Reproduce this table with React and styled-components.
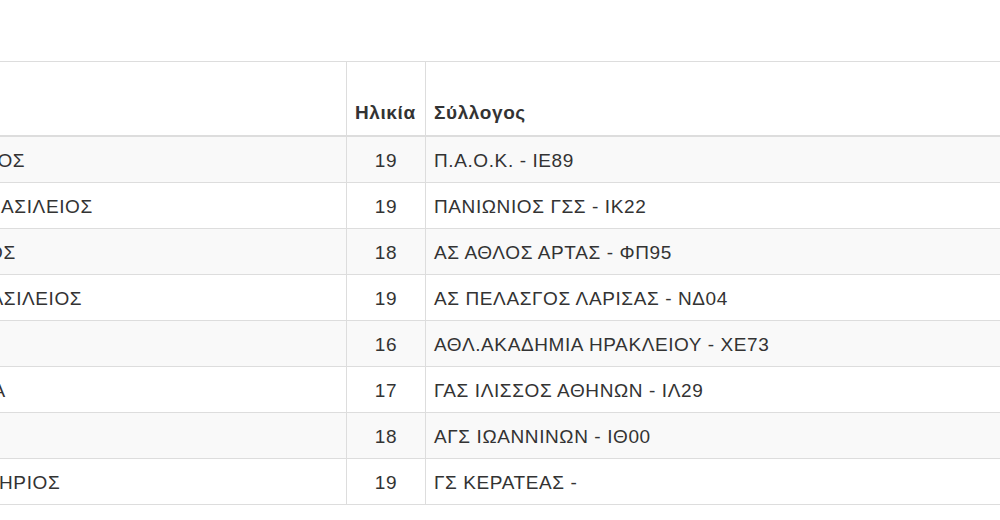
import React from "react";
import styled, { createGlobalStyle } from "styled-components";

const GlobalStyle = createGlobalStyle`
  html, body {
    margin: 0;
    padding: 0;
    background: #fff;
    overflow: hidden;
  }
  body {
    font-family: "Liberation Sans", Arial, sans-serif;
    color: #333;
  }
`;

const Page = styled.div`
  width: 1000px;
  height: 520px;
  overflow: hidden;
  padding-top: 61px;
  box-sizing: border-box;
`;

const Table = styled.table`
  margin-left: -209px;
  width: 1250px;
  border-collapse: collapse;
  border-spacing: 0;
  table-layout: fixed;
  font-size: 19px;
  letter-spacing: 0.6px;
  line-height: 29px;
  border-top: 1px solid #ddd;
  border-bottom: 1px solid #ddd;
`;

const HeadCell = styled.th`
  height: 57px;
  padding: 8px;
  text-align: ${(p) => (p.$center ? "center" : "left")};
  vertical-align: bottom;
  font-weight: bold;
  border-left: 1px solid #ddd;
  border-bottom: 2px solid #ddd;
  white-space: nowrap;
`;

const Row = styled.tr`
  background: ${(p) => (p.$striped ? "#f9f9f9" : "#fff")};
`;

const Cell = styled.td`
  padding: 9px 8px 7px;
  text-align: ${(p) => (p.$center ? "center" : "left")};
  vertical-align: top;
  border-left: 1px solid #ddd;
  border-top: 1px solid #ddd;
  white-space: nowrap;
  overflow: hidden;
`;

const athletes = [
  { name: "ΔΗΜΗΤΡΙΟΥ ΝΙΚΟΛΑΟΣ", age: 19, club: "Π.Α.Ο.Κ. - ΙΕ89" },
  { name: "ΘΕΟΔΩΡΟΠΟΥΛΟΣ ΒΑΣΙΛΕΙΟΣ", age: 19, club: "ΠΑΝΙΩΝΙΟΣ ΓΣΣ - ΙΚ22" },
  { name: "ΠΑΠΑΔΑΚΗΣ ΑΓΓΕΛΟΣ", age: 18, club: "ΑΣ ΑΘΛΟΣ ΑΡΤΑΣ - ΦΠ95" },
  { name: "ΚΩΝΣΤΑΝΤΙΝΙΔΗΣ ΒΑΣΙΛΕΙΟΣ", age: 19, club: "ΑΣ ΠΕΛΑΣΓΟΣ ΛΑΡΙΣΑΣ - ΝΔ04" },
  { name: "ΙΩΑΝΝΟΥ ΠΕΤΡΟΣ", age: 16, club: "ΑΘΛ.ΑΚΑΔΗΜΙΑ ΗΡΑΚΛΕΙΟΥ - ΧΕ73" },
  { name: "ΜΠΑΚΟΥ ΑΙΚΑΤΕΡΙΝΑ", age: 17, club: "ΓΑΣ ΙΛΙΣΣΟΣ ΑΘΗΝΩΝ - ΙΛ29" },
  { name: "ΛΑΜΠΡΟΥ ΠΕΤΡΟΣ", age: 18, club: "ΑΓΣ ΙΩΑΝΝΙΝΩΝ - ΙΘ00" },
  { name: "ΜΑΥΡΟΜΜΑΤΗΣ ΣΩΤΗΡΙΟΣ", age: 19, club: "ΓΣ ΚΕΡΑΤΕΑΣ -" },
];

export default function App() {
  return (
    <Page>
      <GlobalStyle />
      <Table>
        <colgroup>
          <col style={{ width: 555 }} />
          <col style={{ width: 79 }} />
          <col />
        </colgroup>
        <thead>
          <tr>
            <HeadCell>Ονοματεπώνυμο</HeadCell>
            <HeadCell>Ηλικία</HeadCell>
            <HeadCell>Σύλλογος</HeadCell>
          </tr>
        </thead>
        <tbody>
          {athletes.map((a, i) => (
            <Row key={i} $striped={i % 2 === 0}>
              <Cell>{a.name}</Cell>
              <Cell $center>{a.age}</Cell>
              <Cell>{a.club}</Cell>
            </Row>
          ))}
        </tbody>
      </Table>
    </Page>
  );
}
